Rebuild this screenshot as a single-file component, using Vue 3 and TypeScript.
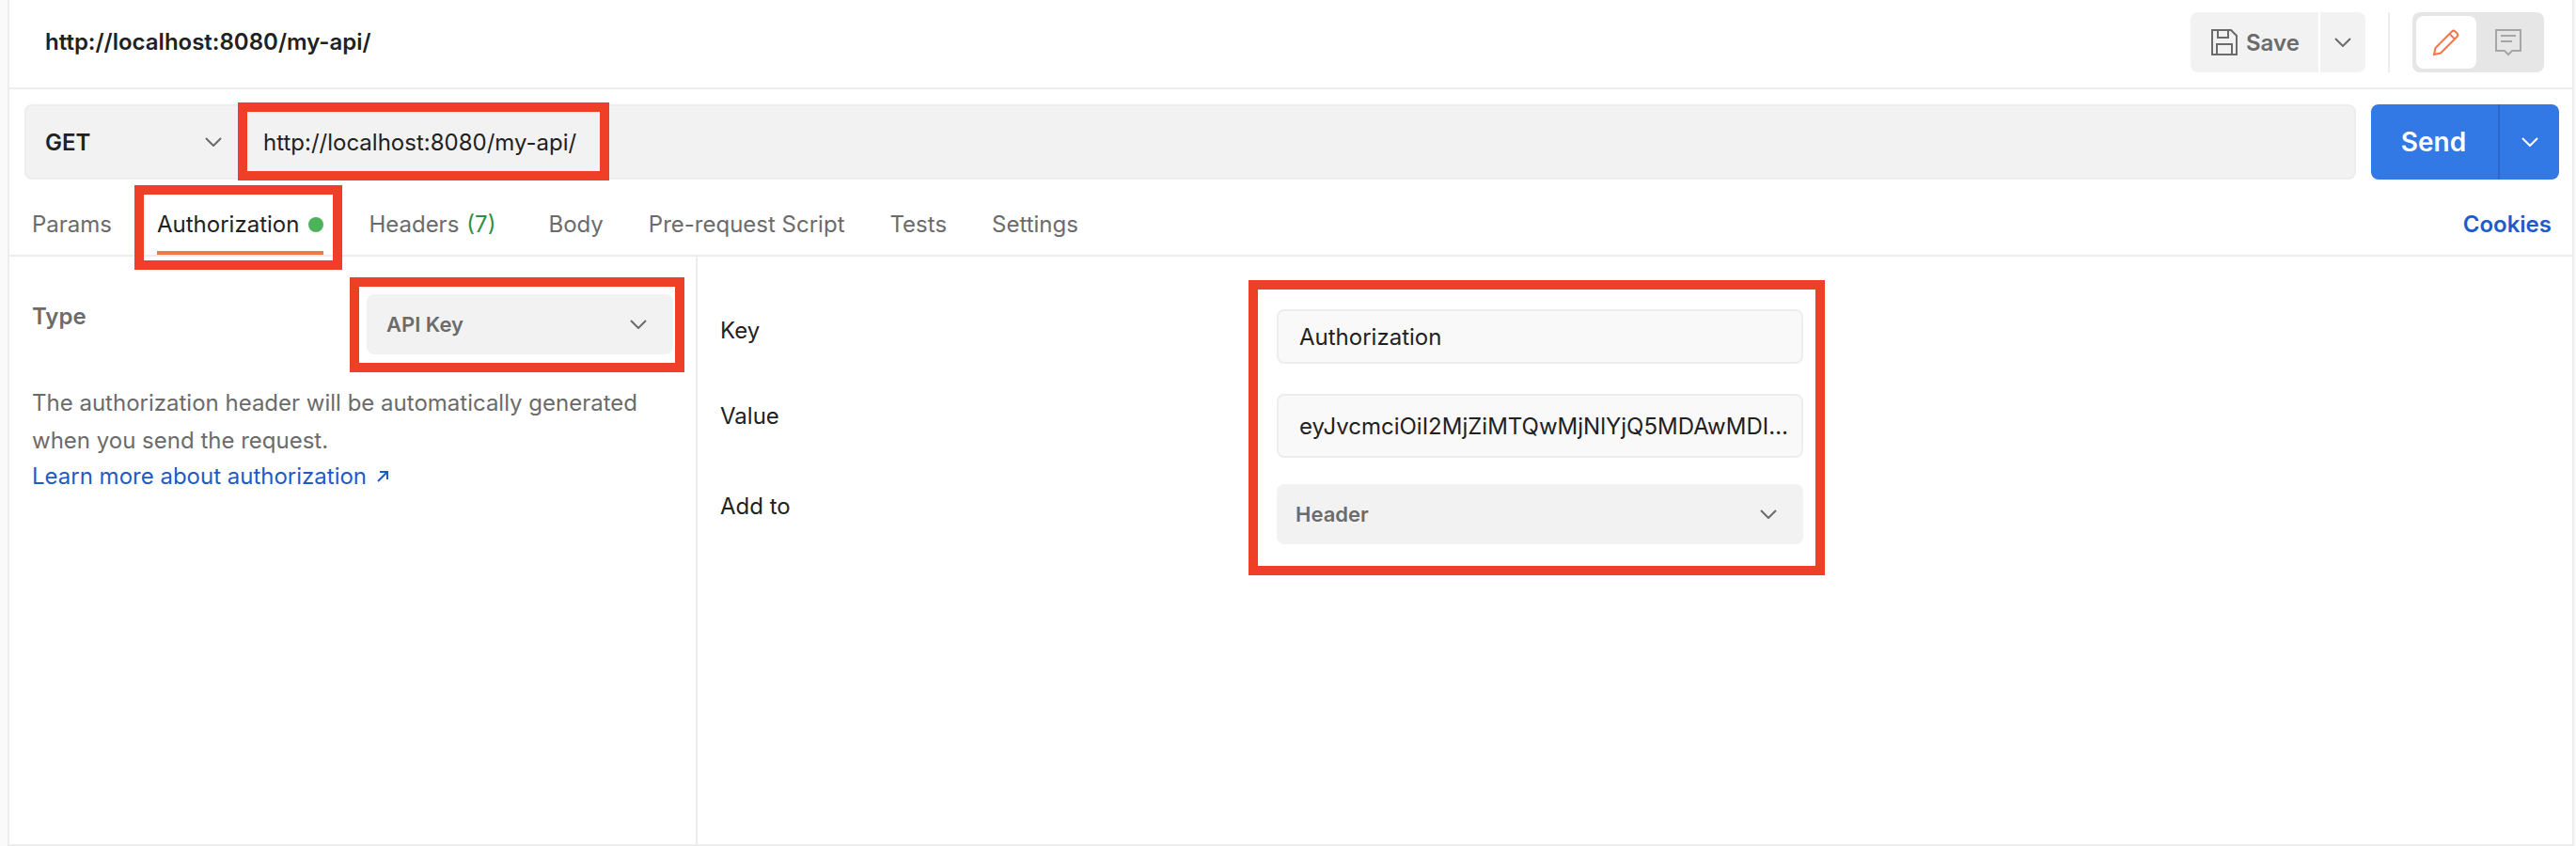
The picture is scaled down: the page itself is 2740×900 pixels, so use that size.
<script setup lang="ts">
interface Tab { label: string; count?: string; active?: boolean; dot?: boolean }
const tabs: Tab[] = [
  { label: 'Params' },
  { label: 'Authorization', active: true, dot: true },
  { label: 'Headers', count: '(7)' },
  { label: 'Body' },
  { label: 'Pre-request Script' },
  { label: 'Tests' },
  { label: 'Settings' },
]
</script>

<template>
  <div class="app">
    <main class="main">
      <header class="top">
        <span class="title">http://localhost:8080/my-api/</span>
        <div class="top-actions">
          <button class="save">
            <svg class="ico" viewBox="0 0 32 32" fill="none" stroke="#6b6b6b" stroke-width="2">
              <path d="M3 3h20l6 6v20H3z" />
              <path d="M9 3v8h11V3" />
              <path d="M8 29V18h16v11" />
            </svg>
            <span>Save</span>
          </button>
          <button class="save-more">
            <svg class="chev" viewBox="0 0 18 10" fill="none" stroke="#6b6b6b" stroke-width="2"><path d="M1 1l8 8 8-8" /></svg>
          </button>
          <span class="vsep"></span>
          <div class="toggle">
            <span class="toggle-on">
              <svg class="ico" viewBox="0 0 32 32" fill="none" stroke="#f0774a" stroke-width="2">
                <path d="M3 29l1.500-7L22 4.500a2.500 2.500 0 0 1 3.500 0l2 2a2.500 2.500 0 0 1 0 3.500L10 27.500z" />
                <path d="M19.500 7l5.500 5.500" />
              </svg>
            </span>
            <span class="toggle-off">
              <svg class="ico" viewBox="0 0 32 32" fill="none" stroke="#a6a6a6" stroke-width="2">
                <path d="M3 3h26v22h-9l-4 4-4-4H3z" />
                <path d="M8 9h16M8 15h12" />
              </svg>
            </span>
          </div>
        </div>
      </header>

      <div class="url-row">
        <div class="url-box">
          <div class="method">
            <span>GET</span>
            <svg class="chev" viewBox="0 0 18 10" fill="none" stroke="#6b6b6b" stroke-width="2"><path d="M1 1l8 8 8-8" /></svg>
          </div>
          <span class="url">http://localhost:8080/my-api/</span>
        </div>
        <div class="send">
          <span class="send-label">Send</span>
          <span class="send-more">
            <svg class="chev" viewBox="0 0 18 10" fill="none" stroke="#fff" stroke-width="2"><path d="M1 1l8 8 8-8" /></svg>
          </span>
        </div>
      </div>

      <nav class="tabs">
        <div v-for="t in tabs" :key="t.label" class="tab" :class="{ active: t.active }">
          <span>{{ t.label }}</span>
          <span v-if="t.count" class="count">{{ t.count }}</span>
          <span v-if="t.dot" class="dot"></span>
        </div>
        <a class="cookies">Cookies</a>
      </nav>

      <section class="body">
        <aside class="left">
          <div class="type-row">
            <span class="type-label">Type</span>
            <div class="select type-select">
              <span>API Key</span>
              <svg class="chev" viewBox="0 0 18 10" fill="none" stroke="#6b6b6b" stroke-width="2"><path d="M1 1l8 8 8-8" /></svg>
            </div>
          </div>
          <p class="desc">The authorization header will be automatically generated when you send the request.</p>
          <a class="learn"><span>Learn more about authorization</span><svg class="arrow" viewBox="0 0 14 14" fill="none" stroke="#1d5bc7" stroke-width="2"><path d="M2 12L12 2M4 2h8v8" /></svg></a>
        </aside>
        <div class="right">
          <div class="labels">
            <span class="lab lab-key">Key</span>
            <span class="lab lab-value">Value</span>
            <span class="lab lab-add">Add to</span>
          </div>
          <div class="fields">
            <div class="field f-key">Authorization</div>
            <div class="field f-value"><span class="ellip">eyJvcmciOiI2MjZiMTQwMjNlYjQ5MDAwMDI0OTg2MzU3NDZlNGM3</span></div>
            <div class="select add-select">
              <span>Header</span>
              <svg class="chev" viewBox="0 0 18 10" fill="none" stroke="#6b6b6b" stroke-width="2"><path d="M1 1l8 8 8-8" /></svg>
            </div>
          </div>
        </div>
      </section>
    </main>

    <span class="mark m-url"></span>
    <span class="mark m-tab"></span>
    <span class="mark m-type"></span>
    <span class="mark m-fields"></span>
  </div>
</template>

<style scoped>
.app {
  position: relative;
  width: 2740px;
  height: 900px;
  box-sizing: border-box;
  padding: 0 2px 0 8px;
  background: #fafafa;
  font-family: Inter, "Liberation Sans", sans-serif;
  font-size: 24px;
  color: #212121;
  overflow: hidden;
}
.main {
  height: 100%;
  box-sizing: border-box;
  display: flex;
  flex-direction: column;
  background: #fff;
  border-left: 2px solid #ededed;
  border-right: 2px solid #ededed;
  border-bottom: 2px solid #ededed;
}
button { border: 0; font: inherit; padding: 0; }

.top {
  height: 95px;
  box-sizing: border-box;
  flex: none;
  display: flex;
  align-items: flex-start;
  justify-content: space-between;
  border-bottom: 2px solid #ededed;
  padding: 13px 30px 0 38px;
}
.title { font-size: 24px; font-weight: 600; line-height: 64px; color: #212121; }
.top-actions { display: flex; align-items: stretch; height: 64px; }
.save {
  width: 136px;
  display: flex;
  align-items: center;
  gap: 7px;
  padding-left: 20px;
  background: #f2f2f2;
  color: #6b6b6b;
  font-weight: 600;
  font-size: 24px;
  border-radius: 8px 0 0 8px;
  box-sizing: border-box;
}
.save-more {
  width: 48px;
  margin-left: 2px;
  background: #f2f2f2;
  border-radius: 0 8px 8px 0;
  display: flex;
  align-items: center;
  justify-content: center;
}
.vsep { width: 2px; background: #ededed; margin: 0 24px; }
.toggle {
  width: 140px;
  box-sizing: border-box;
  padding: 4px;
  background: #e6e6e6;
  border-radius: 8px;
  display: flex;
}
.toggle-on, .toggle-off {
  display: flex;
  align-items: center;
  justify-content: center;
  border-radius: 8px;
}
.toggle-on { width: 64px; background: #fff; }
.toggle-off { flex: 1; }
.ico { width: 32px; height: 32px; flex: none; display: block; }
.chev { width: 18px; height: 10px; flex: none; display: block; }

.url-row {
  flex: none;
  display: flex;
  padding: 16px 14px 0 16px;
  height: 96px;
  box-sizing: border-box;
}
.url-box {
  width: 2480px;
  height: 80px;
  box-sizing: border-box;
  background: #f2f2f2;
  border: 2px solid #ededed;
  border-radius: 8px;
  display: flex;
  align-items: center;
}
.method {
  width: 226px;
  flex: none;
  box-sizing: border-box;
  padding: 0 18px 0 20px;
  display: flex;
  align-items: center;
  justify-content: space-between;
  font-weight: 600;
  font-size: 24px;
}
.url { margin-left: 26px; }
.send {
  margin-left: 16px;
  width: 200px;
  height: 80px;
  display: flex;
  background: #3279e6;
  border-radius: 8px;
  color: #fff;
  font-weight: 600;
  font-size: 28px;
}
.send-label { width: 135px; box-sizing: border-box; padding-right: 2px; display: flex; align-items: center; justify-content: center; }
.send-more {
  flex: 1;
  display: flex;
  align-items: center;
  justify-content: center;
  border-left: 2px solid #2a69cc;
}

.tabs {
  flex: none;
  height: 80px;
  box-sizing: border-box;
  display: flex;
  gap: 48px;
  padding: 0 22px 0 24px;
  margin-bottom: 2px;
  box-shadow: 0 2px 0 #ededed;
}
.tab {
  height: 80px;
  box-sizing: border-box;
  padding-top: 28px;
  line-height: 40px;
  color: #6b6b6b;
  display: flex;
  border-bottom: 4px solid transparent;
}
.tab.active { color: #212121; border-bottom-color: #f0774a; }
.count { color: #2f8f46; margin-left: 8px; margin-right: 8px; }
.dot {
  width: 16px;
  height: 16px;
  margin: 12px 0 0 10px;
  border-radius: 50%;
  background: #4cb35a;
}
.cookies {
  margin-left: auto;
  padding-top: 28px;
  line-height: 40px;
  color: #1d5bc7;
  font-weight: 600;
  font-size: 24px;
}

.body { flex: 1; display: flex; min-height: 0; }
.left {
  width: 732px;
  flex: none;
  box-sizing: border-box;
  border-right: 2px solid #ededed;
  padding: 40px 24px 0 24px;
  color: #6b6b6b;
  font-size: 24px;
}
.type-row { display: flex; justify-content: space-between; align-items: flex-start; }
.type-label { font-weight: 600; line-height: 40px; margin-top: 4px; }
.select {
  background: #f2f2f2;
  border-radius: 8px;
  display: flex;
  align-items: center;
  justify-content: space-between;
  font-weight: 600;
  color: #6b6b6b;
  font-size: 22px;
  box-sizing: border-box;
}
.type-select { width: 326px; height: 64px; padding: 0 28px 0 21px; }
.desc { margin: 32px 0 0; line-height: 40px; width: 660px; }
.learn {
  display: flex;
  align-items: center;
  line-height: 38px;
  color: #1d5bc7;
  white-space: pre;
  margin-top: -1px;
}
.arrow { width: 14px; height: 14px; margin-left: 10px; }

.right { flex: 1; display: flex; padding: 59px 0 0 24px; }
.labels { width: 592px; flex: none; display: flex; flex-direction: column; font-size: 24px; color: #212121; }
.lab { line-height: 40px; }
.lab-value { margin-top: 51px; }
.lab-add { margin-top: 56px; }
.fields { width: 560px; margin-top: -3px; display: flex; flex-direction: column; }
.field {
  box-sizing: border-box;
  background: #f9f9f9;
  border: 2px solid #ededed;
  border-radius: 8px;
  padding: 0 22px;
  font-size: 24px;
  color: #212121;
  display: flex;
  align-items: center;
}
.f-key { height: 58px; }
.f-value { height: 68px; margin-top: 32px; padding-right: 12px; }
.ellip { overflow: hidden; text-overflow: ellipsis; white-space: nowrap; }
.add-select { height: 64px; margin-top: 28px; padding: 0 28px 0 20px; }

.mark {
  position: absolute;
  box-sizing: border-box;
  border: 10px solid #ed4027;
  pointer-events: none;
}
.m-url { left: 253px; top: 109px; width: 395px; height: 83px; }
.m-tab { left: 143px; top: 197px; width: 221px; height: 90px; }
.m-type { left: 372px; top: 295px; width: 356px; height: 101px; }
.m-fields { left: 1328px; top: 298px; width: 613px; height: 314px; }
</style>
